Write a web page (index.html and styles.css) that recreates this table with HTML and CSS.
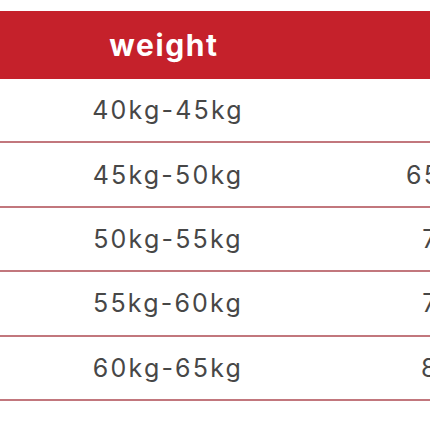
FILE: index.html
```html
<!DOCTYPE html>
<html>
<head>
<meta charset="utf-8">
<link rel="stylesheet" href="styles.css">
</head>
<body>
<div class="page">
  <div class="table">
    <div class="row head">
      <div class="cell c1">weight</div>
      <div class="cell c2"></div>
    </div>
    <div class="row">
      <div class="cell c1">40kg-45kg</div>
      <div class="cell c2">60kg</div>
    </div>
    <div class="row">
      <div class="cell c1">45kg-50kg</div>
      <div class="cell c2">65kg-70kg</div>
    </div>
    <div class="row">
      <div class="cell c1">50kg-55kg</div>
      <div class="cell c2">75-80kg</div>
    </div>
    <div class="row">
      <div class="cell c1">55kg-60kg</div>
      <div class="cell c2">78-85kg</div>
    </div>
    <div class="row">
      <div class="cell c1">60kg-65kg</div>
      <div class="cell c2">80-90kg</div>
    </div>
  </div>
</div>
</body>
</html>
```
FILE: styles.css
```css
html, body {
  margin: 0;
  padding: 0;
  background: #ffffff;
}
.page {
  width: 430px;
  height: 430px;
  overflow: hidden;
  padding-top: 11px;
  box-sizing: border-box;
}
.table {
  width: 624px;
  display: flex;
  flex-direction: column;
}
.row {
  display: grid;
  grid-template-columns: 336px 288px;
  height: 62.4px;
  border-bottom: 2px solid #c2777d;
  font-family: "Inter", "Liberation Sans", sans-serif;
  font-size: 25px;
  color: #474747;
  letter-spacing: 2.2px;
}
.row.head {
  height: 68px;
  border-bottom: none;
  background: #c5212b;
  color: #ffffff;
  font-weight: 700;
  font-size: 30px;
  letter-spacing: 1.6px;
}
.cell {
  display: flex;
  align-items: center;
  justify-content: center;
  white-space: nowrap;
}
.head .c1 {
  padding-right: 8px;
}
```
